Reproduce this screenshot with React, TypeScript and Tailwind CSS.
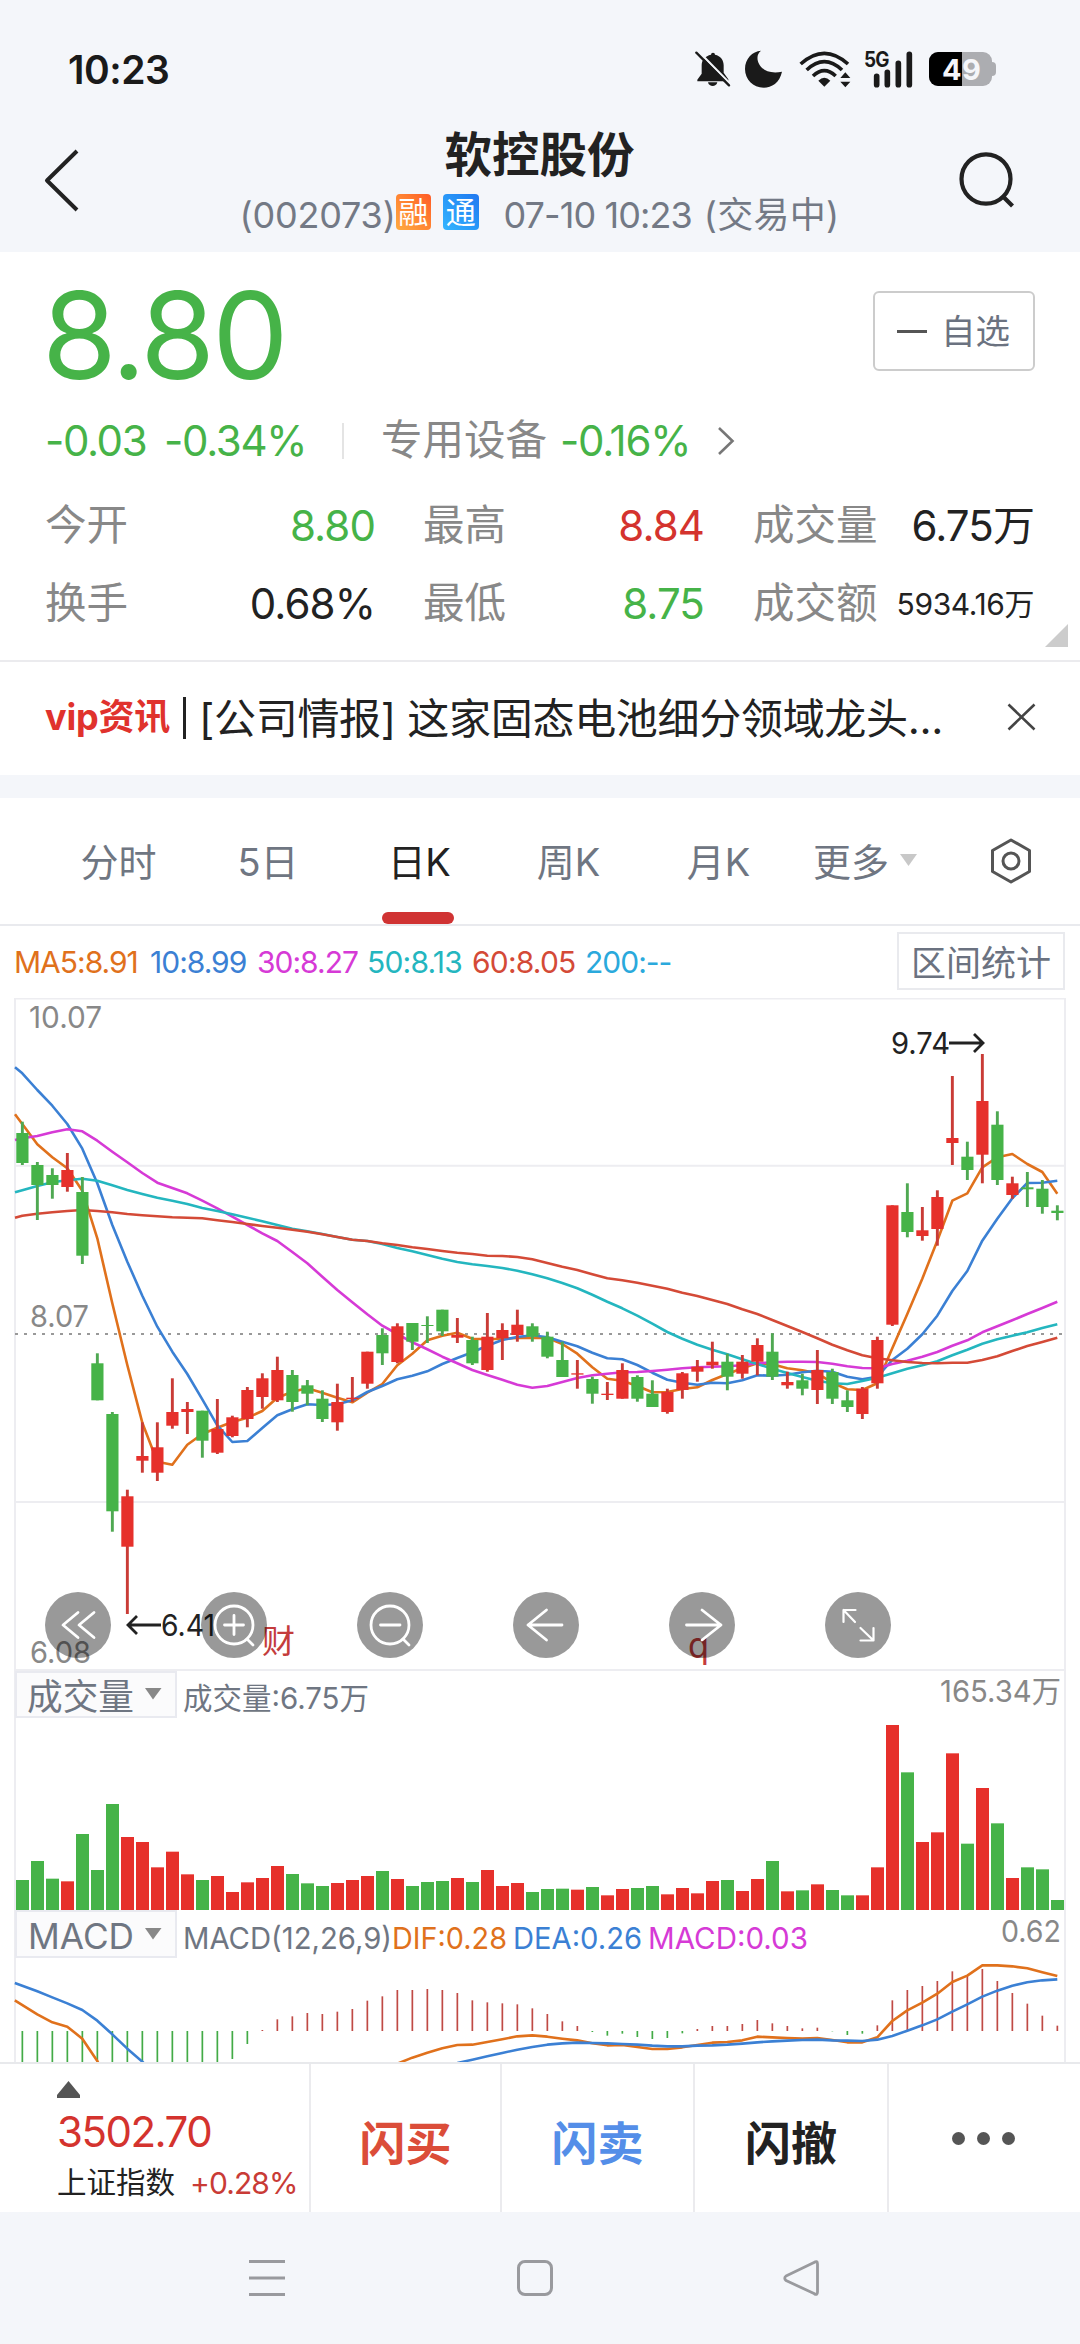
import React from "react";

const UP = "#e6302b";
const DOWN = "#46b348";
const WICK_UP = "#c93b36";
const WICK_DOWN = "#4fa852";
const ORANGE = "#e0711c";
const BLUE = "#3b80d4";
const MAGENTA = "#d63ad6";
const TEAL = "#24b6bf";
const RED = "#d44a37";

const slotX = (i: number) => 22.3 + 15 * i;

type Candle = [kind: "u" | "d", high: number, top: number, bottom: number, low: number];

const CANDLES: Candle[] = [
  ["d", 1121.7, 1133, 1163, 1165], ["d", 1162, 1165, 1185, 1220], ["d", 1168.3, 1175, 1185, 1198.7],
  ["u", 1153, 1170, 1187, 1191.7], ["d", 1177, 1192, 1255.7, 1264], ["d", 1353.3, 1363.3, 1400.3, 1400.3],
  ["d", 1412, 1414, 1511.3, 1531.7], ["u", 1489.7, 1496.3, 1546.7, 1614], ["u", 1422.3, 1456, 1460.7, 1472.7],
  ["u", 1422.3, 1447.3, 1472.7, 1481], ["u", 1378.3, 1412, 1425.7, 1428.7], ["u", 1402, 1409, 1412, 1434],
  ["d", 1410.7, 1410.7, 1440.7, 1457.7], ["u", 1399, 1429, 1452.7, 1454], ["u", 1415.7, 1417.3, 1436, 1437.3],
  ["u", 1387, 1390, 1419, 1427.3], ["u", 1373.3, 1378.3, 1397, 1408.7], ["u", 1356.7, 1370, 1400.3, 1402],
  ["d", 1370, 1375, 1402, 1411.7], ["d", 1380, 1385.3, 1393.7, 1405.3], ["d", 1390.3, 1398.7, 1419, 1422],
  ["u", 1383.7, 1402, 1422.3, 1430.7], ["u", 1377, 1397.7, 1399, 1402], ["u", 1351.7, 1351.7, 1383.7, 1388.7],
  ["d", 1328.3, 1335, 1353.3, 1365], ["u", 1323.3, 1326.3, 1362, 1363.3], ["d", 1323, 1323, 1341.7, 1350],
  ["d", 1316.3, 1325, 1326, 1343], ["d", 1309.7, 1309.7, 1331.3, 1336], ["u", 1318, 1335, 1337.7, 1343],
  ["d", 1336.7, 1340, 1363.3, 1365], ["u", 1313, 1336.7, 1370, 1371.7], ["u", 1323.3, 1330, 1338.3, 1360],
  ["u", 1309.7, 1324.7, 1335, 1341.7], ["d", 1323.3, 1326.3, 1336.7, 1341.7], ["d", 1331.7, 1336.7, 1356.7, 1358.3],
  ["d", 1341.7, 1360, 1377, 1377], ["u", 1360, 1373.3, 1374.6, 1388.7], ["d", 1376.7, 1379, 1393.7, 1403.7],
  ["u", 1382, 1393.7, 1395, 1400], ["u", 1363.3, 1370, 1398.7, 1398.7], ["d", 1375.3, 1377, 1398.7, 1401.7],
  ["d", 1380.3, 1393.7, 1407, 1407], ["u", 1388.7, 1392, 1412, 1413.7], ["u", 1372, 1373.3, 1390, 1398.7],
  ["u", 1360, 1366.7, 1371.7, 1381.7], ["u", 1341.7, 1361.7, 1365.3, 1368.7], ["d", 1353.7, 1361.7, 1376.7, 1390.3],
  ["u", 1355, 1361.7, 1373.7, 1378.7], ["u", 1338.3, 1345, 1361.7, 1375.3], ["d", 1333.3, 1351.7, 1376.7, 1380],
  ["u", 1371.7, 1382, 1385.3, 1388.7], ["d", 1373.7, 1380.3, 1388.7, 1395.3], ["u", 1350, 1370, 1390, 1404],
  ["d", 1368.7, 1372, 1398.7, 1404], ["d", 1390.3, 1400.3, 1407, 1412], ["u", 1387, 1388.7, 1414, 1419],
  ["u", 1336.7, 1340, 1383.3, 1388.7], ["u", 1205.3, 1205.3, 1324.7, 1326], ["d", 1183.3, 1212, 1232, 1237.3],
  ["u", 1207, 1230.3, 1236, 1240.7], ["u", 1190.3, 1197, 1229, 1245.7], ["u", 1076, 1138, 1143, 1165],
  ["d", 1141.7, 1156.7, 1170, 1180], ["u", 1054, 1101, 1154.7, 1183.3], ["d", 1111.3, 1124.7, 1180, 1185],
  ["u", 1176.7, 1183.3, 1195, 1198.7], ["d", 1172, 1187.3, 1189.3, 1207], ["d", 1180, 1188.7, 1207, 1213.7],
  ["d", 1205.3, 1210.7, 1213, 1220.3],
];

/* Each series begins with its value on the left frame edge. */
const MA5 = [1114.3, 1124, 1144.3, 1157.3, 1168.3, 1190.7, 1238.3, 1303.3, 1365, 1422.7, 1461.7, 1464.7, 1444.7, 1434, 1427.7, 1422, 1417.7, 1411, 1397.7, 1391.7, 1388.3, 1392.7, 1397.7, 1402.3, 1392.7, 1384, 1365.3, 1353.7, 1340.3, 1335.7, 1332.7, 1338.7, 1339.3, 1338.7, 1338, 1338, 1337.7, 1344, 1353.7, 1367.3, 1378.7, 1380.7, 1386, 1392.3, 1392, 1389, 1387.3, 1380, 1374, 1368.3, 1363.3, 1364.3, 1368.3, 1370.3, 1373.3, 1382.7, 1389.3, 1390, 1383.3, 1348.3, 1314, 1278.7, 1240.7, 1200.7, 1193.3, 1167.3, 1157.3, 1154, 1164, 1172, 1193.7];
const MA10 = [1067.3, 1073.3, 1090, 1105.7, 1124, 1148.7, 1183.3, 1225, 1261.7, 1295.7, 1326.7, 1351.7, 1374, 1399.3, 1425.3, 1442, 1441, 1428, 1415.3, 1409.3, 1404.3, 1405, 1404.3, 1400.3, 1392, 1386, 1379.3, 1375.7, 1371.3, 1364, 1358, 1352.3, 1345.7, 1340, 1337, 1335.3, 1337.3, 1341.7, 1346.3, 1352.7, 1358.3, 1359.3, 1365, 1372.7, 1379.7, 1382.7, 1384.7, 1382.7, 1383.3, 1380.3, 1375.3, 1375.7, 1374.7, 1372.3, 1370.7, 1371.7, 1376.7, 1379.3, 1376.7, 1360, 1348.7, 1334.3, 1315.7, 1291, 1271, 1240.7, 1218.7, 1198.3, 1183, 1182.7, 1180.7];
const MA30 = [1140, 1138.3, 1136, 1132.3, 1129.3, 1131.3, 1140.7, 1151.7, 1162.3, 1173, 1182.7, 1188, 1193.3, 1200.7, 1208.3, 1216.7, 1225, 1233.3, 1241, 1252, 1263.3, 1276.7, 1290, 1302.3, 1314.3, 1325.7, 1334, 1342.3, 1349.3, 1356.7, 1363.3, 1370, 1375, 1379.7, 1384.7, 1387.7, 1386, 1382, 1378, 1375.3, 1373.7, 1372.3, 1372, 1371, 1369.7, 1368.3, 1367.3, 1366.7, 1366.3, 1365.3, 1363.3, 1362.3, 1361.7, 1361.7, 1362, 1363.7, 1366.3, 1368, 1368.3, 1364, 1360.7, 1356.7, 1352, 1345.7, 1340.3, 1332.3, 1326.3, 1320.3, 1314, 1308, 1301.7];
const MA50 = [1192.3, 1190.3, 1186, 1182.3, 1180.3, 1178.7, 1180.7, 1185.3, 1190, 1194, 1197.7, 1200.7, 1204, 1208, 1211, 1214.3, 1217.7, 1221.3, 1225, 1228.7, 1231.3, 1234, 1237, 1239.7, 1241, 1244, 1248, 1251.3, 1255, 1258.7, 1262, 1264.3, 1266, 1268, 1270.7, 1274.3, 1278.3, 1283, 1288.3, 1294.7, 1301.7, 1308.3, 1315.7, 1323.7, 1332, 1338.7, 1344.7, 1349.7, 1354.3, 1359.3, 1364, 1368.7, 1373, 1377, 1380.7, 1383.3, 1384, 1381, 1377.7, 1373.3, 1368.7, 1365.3, 1361.3, 1355.3, 1349.7, 1343.7, 1339.3, 1335.7, 1332.3, 1328, 1324.3];
const MA60 = [1217.7, 1215.7, 1213.7, 1212.3, 1211, 1210, 1211, 1212.3, 1214, 1215.3, 1216.3, 1217.3, 1217.7, 1218.3, 1220.3, 1222, 1224, 1226, 1227.7, 1229.7, 1231.7, 1234.3, 1237, 1239.7, 1241, 1243.3, 1245, 1247.3, 1249, 1251, 1252.7, 1254, 1255.7, 1256, 1257, 1259.3, 1263, 1266.7, 1270, 1274.3, 1278.3, 1280.3, 1282.7, 1285.7, 1288.7, 1292.7, 1296, 1300, 1304, 1309.3, 1314, 1320, 1326, 1332, 1338.3, 1344.7, 1350.3, 1355.3, 1358.3, 1360.3, 1362, 1363, 1363.3, 1362.7, 1362.7, 1360, 1356.3, 1351, 1346, 1342, 1337.7];

/* Column tops in thirds of a pixel; the baseline is at 750. */
const VOLUME_TOPS = [660, 603, 656, 664, 522, 630, 432, 531, 546, 622, 575, 643, 660, 648, 696, 667, 654, 618, 642, 670, 678, 669, 660, 648, 633, 657, 678, 666, 663, 654, 666, 630, 678, 669, 696, 687, 686, 689, 681, 706, 687, 684, 678, 703, 684, 700, 663, 660, 693, 657, 603, 694, 691, 673, 690, 706, 706, 622, 195, 337, 546, 517, 280, 551, 384, 490, 654, 622, 628, 720];

/* Histogram ends and lines in thirds of a pixel; the zero line is at 1113. */
const MACD_ENDS = [1240, 1240, 1240, 1240, 1240, 1240, 1240, 1240, 1240, 1240, 1240, 1240, 1240, 1240, 1197, 1152, 1110, 1078, 1069, 1059, 1062, 1055, 1047, 1022, 1009, 990, 990, 987, 990, 999, 1021, 1027, 1030, 1033, 1045, 1062, 1084, 1098, 1116, 1127, 1121, 1131, 1137, 1134, 1120, 1107, 1098, 1098, 1092, 1080, 1090, 1098, 1105, 1103, 1114, 1125, 1121, 1096, 1021, 990, 978, 963, 934, 948, 927, 963, 999, 1031, 1067, 1097];
const DIF_LEFT: [number, number][] = [[-0.5, 1021], [1, 1063], [2, 1087], [3, 1100], [4, 1136], [5, 1203], [6, 1290]];
const DIF_RIGHT = [1211, 1193, 1178, 1165, 1155, 1154, 1146, 1138, 1129, 1126, 1130, 1136, 1141, 1150, 1156, 1155, 1161, 1167, 1167, 1162, 1155, 1148, 1146, 1141, 1130, 1132, 1134, 1136, 1134, 1140, 1147, 1147, 1132, 1083, 1051, 1028, 1001, 966, 947, 916, 916, 919, 925, 937, 948];
const DEA_LEFT: [number, number][] = [[-0.5, 969], [0, 977], [1, 994], [2, 1012], [3, 1030], [4, 1050], [5, 1082], [6, 1123], [7, 1166], [8, 1205], [9, 1250]];
const DEA_RIGHT = [1209, 1199, 1189, 1179, 1169, 1161, 1154, 1150, 1148, 1149, 1150, 1152, 1154, 1157, 1159, 1159, 1157, 1156, 1154, 1151, 1147, 1144, 1142, 1140, 1139, 1141, 1142, 1143, 1139, 1128, 1112, 1096, 1078, 1055, 1033, 1010, 992, 977, 967, 961, 958];

const paneY = (v: number) => 1660 + v / 3;
const maPoints = (ys: number[]) => ys.map((y, i) => `${i === 0 ? 15 : slotX(i - 1)},${y}`).join(" ");
const leftPoints = (ps: [number, number][]) => ps.map(([i, v]) => `${slotX(i)},${paneY(v)}`).join(" ");
const rightPoints = (vs: number[], start: number) => vs.map((v, k) => `${slotX(start + k)},${paneY(v)}`).join(" ");

function Line({ points, color }: { points: string; color: string }) {
  return <polyline points={points} fill="none" stroke={color} strokeWidth={2.6} strokeLinejoin="round" />;
}

function StatusBar() {
  return (
    <div className="flex h-[138px] items-center pl-[68px] pr-[84px]">
      <span className="text-[39px] font-semibold leading-none tracking-[-0.5px] text-[#1a1a1a]">10:23</span>
      <div className="ml-auto flex items-center">
        <svg className="h-[38px] w-[37px]" viewBox="18 28 111 114" fill="#1a1a1a">
          <path d="M66 42a6 6 0 0 1 12 0c17 4 26 16 26 32v22l14 20v6H25v-5l13-18V74c0-17 11-28 28-32z" />
          <path d="M57 125h28c-3 15-25 15-28 0z" />
          <path d="M24 28L130 136" stroke="#f4f6fa" strokeWidth="7" />
          <path d="M22 36L120 134" stroke="#1a1a1a" strokeWidth="7" strokeLinecap="round" />
        </svg>
        <svg className="ml-[13px] h-[38px] w-[38px]" viewBox="168 30 114 114" fill="#1a1a1a">
          <path d="M216 32C190 50 212 110 279 95C272 128 248 143 224 143C192 143 168 118 168 87C168 56 190 34 216 32z" />
        </svg>
        <svg className="ml-[16px] h-[38px] w-[52px]" viewBox="329 28 156 114" fill="none" stroke="#1a1a1a" strokeWidth="11">
          <path d="M334 70Q405 6 476 70" />
          <path d="M352 88Q405 38 458 88" />
          <path d="M371 106Q405 74 439 106" />
          <path d="M387 120Q405 102 423 120L405 138z" fill="#1a1a1a" stroke="none" />
          <path d="M453 112L468 95L483 112zM453 123H483L468 140z" fill="#1a1a1a" stroke="none" />
        </svg>
        <div className="relative ml-[13px] h-[38px] w-[50px]">
          <svg className="size-full" viewBox="524 28 150 114" fill="none" stroke="#1a1a1a" strokeWidth="17" strokeLinecap="round">
            <path d="M562 107V132M594 95V132M627 68V132M660 41V132" />
          </svg>
          <span className="absolute left-0 top-[-1px] origin-left scale-x-90 text-[21px] font-bold leading-none tracking-[-1px] text-[#1a1a1a]">5G</span>
        </div>
        <div className="relative ml-[15px] flex h-[34px] w-[67px] items-center">
          <div className="flex h-[34px] w-[63px] overflow-hidden rounded-[9px] bg-[#acadb1]">
            <div className="h-full w-[33px] bg-black" />
          </div>
          <div className="h-[14px] w-[4px] rounded-r-[4px] bg-[#acadb1]" />
          <span className="absolute left-[13px] top-[2px] text-[29px] font-bold leading-[32px] tracking-[0.5px] text-[#f5f6fa]">49</span>
        </div>
      </div>
    </div>
  );
}

function Header() {
  return (
    <header className="flex h-[114px] pl-[43px] pr-[62px]">
      <svg className="mr-[38px] mt-[8px] h-[68px] w-[40px]" viewBox="0 0 40 68" fill="none" stroke="#222" strokeWidth="4">
        <path d="M34 5L4 34.500L34 64" strokeLinejoin="round" />
      </svg>
      <div className="flex flex-1 flex-col items-center">
        <h1 className="mt-[-8px] text-[47.5px] font-bold leading-[50px] text-[#222]">软控股份</h1>
        <div className="mt-[14px] flex h-[42px] w-[600px] items-center whitespace-nowrap text-[36px] leading-[42px] text-[#737985]">
          <span className="w-[156px] tracking-[-0.2px]">(002073)</span>
          <span className="-mt-[6px] flex size-[36px] items-center justify-center rounded-[4px] bg-linear-to-tr from-[#ffab40] to-[#ff5a26] text-[30px] leading-none text-white">融</span>
          <span className="-mt-[6px] ml-[12px] flex size-[36px] items-center justify-center rounded-[4px] bg-linear-to-tr from-[#35b5ff] to-[#2178f0] text-[30px] leading-none text-white">通</span>
          <span className="ml-[25px] w-[203px] tracking-[-0.9px]">07-10 10:23</span>
          <span className="tracking-[0.3px]">(交易中)</span>
        </div>
      </div>
      <svg className="mt-[13px] h-[60px] w-[60px]" viewBox="0 0 60 60" fill="none" stroke="#222" strokeWidth="4.2">
        <ellipse cx="28" cy="28" rx="24.5" ry="24.7" />
        <path d="M44 44.500L54.500 55" />
      </svg>
    </header>
  );
}

function Quote({ label, value, className }: { label: string; value: string; className: string }) {
  return (
    <div className="flex h-[78px] items-center justify-between">
      <span className="text-[41.5px] text-[#888]">{label}</span>
      <span className={className}>{value}</span>
    </div>
  );
}

function Summary() {
  const big = "text-[42px] tracking-[-0.9px]";
  return (
    <section className="relative h-[410px] border-b-2 border-[#ebebee] bg-white px-[45px]">
      <div className="flex h-[150px] justify-between">
        <div className="-ml-[3px] mt-[23px] text-[121px] leading-[120px] tracking-[-3px] text-[#46b348]">8.80</div>
        <button className="mt-[39px] flex h-[80px] w-[162px] items-center rounded-[6px] border-2 border-[#ccc] pl-[22px]">
          <span className="h-[3px] w-[30px] bg-[#555]" />
          <span className="ml-[14px] mt-[2px] text-[34.5px] text-[#6b7280]">自选</span>
        </button>
      </div>
      <div className="flex h-[77px] items-center text-[42px] leading-none text-[#46b348]">
        <span className="w-[119px] tracking-[-1.4px]">-0.03</span>
        <span className="w-[178px] tracking-[-1.3px]">-0.34%</span>
        <span className="h-[36px] w-[2px] bg-[#e4e4e4]" />
        <span className="ml-[37px] w-[179px] text-[41.5px] text-[#888]">专用设备</span>
        <span className="w-[157px] tracking-[-1.2px]">-0.16%</span>
        <svg className="h-[30px] w-[20px]" viewBox="0 0 20 30" fill="none" stroke="#777" strokeWidth="2.6"><path d="M2 2L15.500 15L2 28" /></svg>
      </div>
      <div className="mt-[8px] grid grid-cols-[330px_329px_279px] whitespace-nowrap leading-none">
        <div><Quote label="今开" value="8.80" className={`${big} text-[#46b348]`} /></div>
        <div className="pl-[48px]"><Quote label="最高" value="8.84" className={`${big} text-[#d4332e]`} /></div>
        <div className="-mr-[51px] pl-[49px]"><Quote label="成交量" value="6.75万" className={`${big} text-[#222]`} /></div>
        <div><Quote label="换手" value="0.68%" className={`${big} text-[#222]`} /></div>
        <div className="pl-[48px]"><Quote label="最低" value="8.75" className={`${big} text-[#46b348]`} /></div>
        <div className="-mr-[51px] pl-[49px]"><Quote label="成交额" value="5934.16万" className="text-[30px] tracking-[-0.4px] text-[#222]" /></div>
      </div>
      <svg className="absolute bottom-[13px] right-[12px] size-[23px]" viewBox="0 0 22 22"><path d="M22 0V22H0z" fill="#ccc" /></svg>
    </section>
  );
}

function News() {
  return (
    <section className="flex h-[113px] items-center whitespace-nowrap bg-white pl-[45px] pr-[44px] leading-none">
      <span className="-mt-[4px] w-[138px] text-[36px] font-bold tracking-[-0.2px] text-[#e0322d]">vip资讯</span>
      <span className="-mt-[2px] h-[42px] w-[3px] bg-[#222]" />
      <span className="ml-[13px] flex-1 text-[42px] tracking-[-0.3px] text-[#222]">[公司情报] 这家固态电池细分领域龙头...</span>
      <svg className="-mt-[3px] h-[28px] w-[29px]" viewBox="0 0 29 28" fill="none" stroke="#444" strokeWidth="2.6"><path d="M1.500 1.500L27.500 26.500M27.500 1.500L1.500 26.500" /></svg>
    </section>
  );
}

function Tabs() {
  return (
    <nav className="flex h-[128px] border-b-2 border-[#e9eaee] bg-white text-[38px] leading-none text-[#6f7682]">
      <div className="ml-[43px] flex w-[151px] items-center justify-center pt-[2px]">分时</div>
      <div className="flex w-[148px] items-center justify-center pt-[2px]">5日</div>
      <div className="relative flex w-[152px] items-center justify-center pl-[2px] pt-[2px] tracking-[-0.5px] text-[#222]">
        日K
        <span className="absolute bottom-0 left-[40px] h-[12px] w-[72px] rounded-[6px] bg-[#d03333]" />
      </div>
      <div className="flex w-[149px] items-center justify-center pt-[2px]">周K</div>
      <div className="flex w-[151px] items-center justify-center pt-[2px]">月K</div>
      <div className="ml-[19px] flex w-[177px] items-center pt-[2px]">
        更多
        <svg className="-mt-[4px] ml-[11px] h-[12px] w-[17px]" viewBox="0 0 17 12"><path d="M0 0H17L8.500 12z" fill="#c8c8c8" /></svg>
      </div>
      <svg className="mt-[40px] h-[46px] w-[42px]" viewBox="0 0 42 46" fill="none" stroke="#555" strokeWidth="3">
        <path d="M21 2L39.500 12.500V33.500L21 44L2.500 33.500V12.500z" strokeLinejoin="round" />
        <circle cx="21" cy="23" r="8" />
      </svg>
    </nav>
  );
}

function Legend() {
  return (
    <div className="flex h-[72px] items-center whitespace-nowrap bg-white pl-[14px] pr-[15px] text-[30px] leading-none tracking-[-1px]">
      <span className="w-[136px] text-[#e0711c]">MA5:8.91</span>
      <span className="w-[107px] text-[#3b80d4]">10:8.99</span>
      <span className="w-[110px] text-[#d63ad6]">30:8.27</span>
      <span className="w-[105px] tracking-[-0.8px] text-[#24b6bf]">50:8.13</span>
      <span className="w-[113px] tracking-[-0.8px] text-[#d44a37]">60:8.05</span>
      <span className="text-[#2aa9dc]">200:--</span>
      <span className="mb-[2px] ml-auto flex h-[58px] w-[168px] items-center justify-center border-2 border-[#e9eaee] pt-[5px] text-[35px] tracking-normal text-[#6b7280]">区间统计</span>
    </div>
  );
}

function Label({ x, y, w, children, fill = "#888", size = 30 }: { x: number; y: number; w: number; children: string; fill?: string; size?: number }) {
  return (
    <text x={x} y={y} textLength={w} lengthAdjust="spacingAndGlyphs" fontSize={size} fill={fill}>{children}</text>
  );
}

function Charts() {
  return (
    <svg className="block h-[1064px] w-[1080px] bg-white" viewBox="0 998 1080 1064">
      <g stroke="#ededf1" strokeWidth="2" fill="none">
        <path d="M15 2062V998.500H1065V2062" />
        <path d="M15 1165.700H1065M15 1502H1065M15 1670H1065" />
      </g>
      <path d="M15 1334H1063" stroke="#999" strokeWidth="2" strokeDasharray="3 6" />
      <Label x={29} y={1028} w={73}>10.07</Label>
      <Label x={30} y={1327} w={59}>8.07</Label>
      <Label x={30} y={1663} w={61}>6.08</Label>

      <Line points={maPoints(MA5)} color={ORANGE} />
      <Line points={maPoints(MA10)} color={BLUE} />
      <Line points={maPoints(MA30)} color={MAGENTA} />
      <Line points={maPoints(MA50)} color={TEAL} />
      <Line points={maPoints(MA60)} color={RED} />
      {CANDLES.map(([kind, high, top, bottom, low], i) => (
        <g key={i}>
          <rect x={slotX(i) - 1.4} y={high} width={2.9} height={low - high} fill={kind === "u" ? WICK_UP : WICK_DOWN} />
          <rect x={slotX(i) - 6} y={top} width={12.2} height={bottom - top} fill={kind === "u" ? UP : DOWN} />
        </g>
      ))}

      <g fill="none" stroke="#222" strokeWidth="2.8">
        <path d="M949 1043H983M974 1034L983 1043L974 1052" />
        <path d="M161 1625H128M137 1616L128 1625L137 1634" />
      </g>
      <Label x={891} y={1054} w={59} fill="#222">9.74</Label>
      <Label x={161} y={1636} w={54} fill="#222">6.41</Label>
      <Label x={262} y={1653} w={33} fill="#c43c3c" size={33}>财</Label>
      <Label x={688} y={1658} w={21} fill="#c43c3c" size={36}>q</Label>

      <g fill="#000" fillOpacity="0.4">
        {[78, 234, 390, 546, 702, 858].map((cx) => <circle key={cx} cx={cx} cy={1625} r={33} />)}
      </g>
      <g fill="none" stroke="#fff" strokeWidth="2.8" strokeLinecap="round" strokeLinejoin="round">
        <path d="M78 1612.500L63 1625L78 1637.500M94 1612.500L79 1625L94 1637.500" />
        <circle cx="234" cy="1625" r="19" />
        <path d="M224.500 1625H243.500M234 1615.500V1634.500M247 1639L253 1645" />
        <circle cx="390" cy="1625" r="19" />
        <path d="M380.500 1625H400M403 1639L409 1645" />
        <path d="M562 1625H528M546.500 1610L528 1625L546.500 1640" />
        <path d="M686.500 1625H721M702 1610L721 1625L702 1640" />
        <path strokeWidth="2.2" d="M855 1622L843.500 1610M855.500 1610H843.500V1622M860.500 1628L873 1640M860.500 1640.500H873.500V1628" />
      </g>

      <g fill="#fbfbfc" stroke="#e9eaf0" strokeWidth="2">
        <rect x="16" y="1672" width="160" height="45" />
        <rect x="16" y="1911" width="160" height="46" />
      </g>
      <Label x={27} y={1710} w={107} fill="#6f7682" size={36}>成交量</Label>
      <path d="M145 1688H161.500L153 1699.500z" fill="#888" />
      <Label x={183} y={1709} w={186} fill="#6f7682" size={30}>成交量:6.75万</Label>
      <Label x={940} y={1702} w={121}>165.34万</Label>
      {VOLUME_TOPS.map((v, i) => (
        <rect key={i} x={slotX(i) - 6.3} y={paneY(v)} width={13} height={(750 - v) / 3} fill={CANDLES[i][0] === "u" ? UP : DOWN} />
      ))}

      <Label x={28} y={1949} w={106} fill="#6f7682" size={35}>MACD</Label>
      <path d="M145 1928H161.500L153 1939.500z" fill="#888" />
      <Label x={183} y={1949} w={209} fill="#6f7682">MACD(12,26,9)</Label>
      <Label x={392} y={1949} w={115} fill={ORANGE}>DIF:0.28</Label>
      <Label x={513} y={1949} w={129} fill={BLUE}>DEA:0.26</Label>
      <Label x={648} y={1949} w={160} fill={MAGENTA}>MACD:0.03</Label>
      <Label x={1001} y={1942} w={60}>0.62</Label>
      {MACD_ENDS.map((v, i) => {
        const y = paneY(Math.min(v, 1113));
        return (
          <rect key={i} x={slotX(i) - 0.8} y={y} width={1.7} height={Math.abs(v - 1113) / 3} fill={v < 1113 ? "#c04a45" : "#43ab46"} />
        );
      })}
      <Line points={leftPoints(DIF_LEFT)} color={ORANGE} />
      <Line points={rightPoints(DIF_RIGHT, 25)} color={ORANGE} />
      <Line points={leftPoints(DEA_LEFT)} color={BLUE} />
      <Line points={rightPoints(DEA_RIGHT, 29)} color={BLUE} />
    </svg>
  );
}

function ActionBar() {
  return (
    <section className="flex h-[150px] whitespace-nowrap border-t-2 border-[#e8e9ec] bg-white leading-none">
      <div className="flex w-[311px] flex-col border-r-2 border-[#ebebee] pl-[57px]">
        <svg className="mt-[17px] h-[17px] w-[23px]" viewBox="0 0 23 17"><path d="M11.500 0L23 14V17H0V14z" fill="#555" /></svg>
        <span className="mt-[13px] text-[42px] tracking-[-1.5px] text-[#d4332e]">3502.70</span>
        <div className="mt-[15px] flex text-[30px]">
          <span className="w-[133px] text-[29.5px] text-[#222]">上证指数</span>
          <span className="tracking-[-0.9px] text-[#c93b36]">+0.28%</span>
        </div>
      </div>
      <div className="flex w-[191px] items-center justify-center border-r-2 border-[#ebebee] pt-[10px] text-[46px] font-bold text-[#db4d39]">闪买</div>
      <div className="flex w-[193px] items-center justify-center border-r-2 border-[#ebebee] pt-[10px] text-[46px] font-bold text-[#548ee8]">闪卖</div>
      <div className="flex w-[194px] items-center justify-center border-r-2 border-[#ebebee] pt-[10px] text-[46px] font-bold text-[#222]">闪撤</div>
      <div className="flex flex-1 items-center justify-center gap-[12px] pr-[2px]">
        <span className="size-[13px] rounded-full bg-[#555]" />
        <span className="size-[13px] rounded-full bg-[#555]" />
        <span className="size-[13px] rounded-full bg-[#555]" />
      </div>
    </section>
  );
}

function SystemNav() {
  return (
    <div className="flex h-[132px] pt-[47px]">
      <svg className="ml-[249px] h-[38px] w-[37px]" viewBox="0 0 37 38" stroke="#999a9e" strokeWidth="3"><path d="M0 2.500H36M0 19H36M0 35.500H36" /></svg>
      <span className="ml-[231px] mt-px size-[36px] rounded-[8px] border-3 border-[#999a9e]" />
      <svg className="ml-[230px] h-[38px] w-[37px]" viewBox="0 0 37 38" fill="none" stroke="#999a9e" strokeWidth="2.8" strokeLinejoin="round"><path d="M31 3.500Q34.500 1 34.500 5V33Q34.500 37 31 34.500L3 21.500Q0.500 19 3 17z" /></svg>
    </div>
  );
}

export default function App() {
  return (
    <main className="h-[2344px] w-[1080px] overflow-hidden bg-[#f4f6fa] font-['Inter','Noto_Sans_CJK_SC',sans-serif]">
      <StatusBar />
      <Header />
      <Summary />
      <News />
      <div className="h-[23px]" />
      <Tabs />
      <Legend />
      <Charts />
      <ActionBar />
      <SystemNav />
    </main>
  );
}
